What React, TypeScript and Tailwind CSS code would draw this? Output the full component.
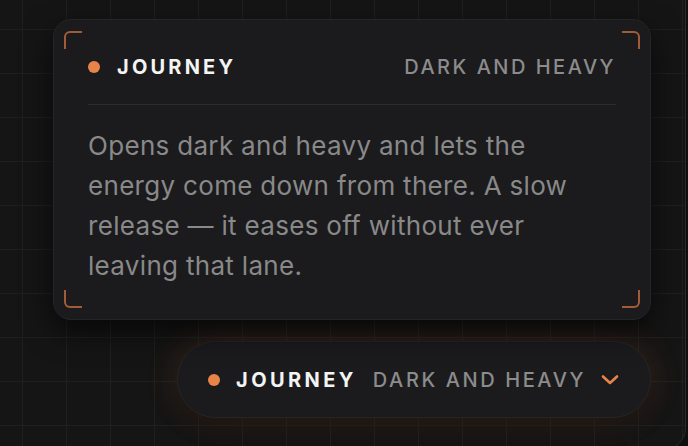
import React from "react";

function Bracket({ pos }: { pos: "tl" | "tr" | "bl" | "br" }) {
  const cls =
    pos === "tl"
      ? "top-[11px] left-[10px] border-t-2 border-l-2 rounded-tl-[6px]"
      : pos === "tr"
      ? "top-[11px] right-[10px] border-t-2 border-r-2 rounded-tr-[6px]"
      : pos === "bl"
      ? "bottom-[11px] left-[10px] border-b-2 border-l-2 rounded-bl-[6px]"
      : "bottom-[11px] right-[10px] border-b-2 border-r-2 rounded-br-[6px]";
  return <span className={`absolute w-[18px] h-[18px] border-[#c46c3c]/80 ${cls}`} />;
}

export default function App() {
  return (
    <div
      className="w-[688px] h-[446px] overflow-hidden bg-[#0f0f0f]"
      style={{ fontFamily: "Inter, 'Noto Sans', sans-serif" }}
    >
      <div className="-ml-[20px] -mt-[20px] w-[706px] h-[470px] rounded-[22px] border border-[#2a2a2a] bg-[#151515] bg-[linear-gradient(to_right,#1f1f1f_1px,transparent_1px),linear-gradient(to_bottom,#1f1f1f_1px,transparent_1px)] bg-[size:44px_44px] bg-[position:41px_4px] pt-[38px] pl-[72px]">
        <div className="w-[598px] flex flex-col items-end gap-[21px]">
          <div className="relative w-full rounded-[18px] border border-[#252527] bg-[#1b1b1d] shadow-[0_12px_30px_rgba(0,0,0,0.65)] px-[34px] pt-[33px] pb-[33px]">
            <Bracket pos="tl" />
            <Bracket pos="tr" />
            <Bracket pos="bl" />
            <Bracket pos="br" />
            <div className="flex items-center justify-between h-[28px]">
              <div className="flex items-center gap-[17px]">
                <span className="w-[12px] h-[12px] rounded-full bg-[#e8834a]" />
                <span className="text-[20px] font-bold tracking-[0.16em] text-[#f4f4f4] leading-[28px]">
                  JOURNEY
                </span>
              </div>
              <span className="text-[20px] font-medium tracking-[0.125em] text-[#8c8c8c] leading-[28px]">
                DARK AND HEAVY
              </span>
            </div>
            <div className="mt-[23px] h-px bg-[#2c2c2e]" />
            <p className="mt-[21px] text-[26px] tracking-[0.012em] leading-[40px] text-[#898989] pr-[30px]">
              Opens dark and heavy and lets the energy come down from there. A slow
              release — it eases off without ever leaving that lane.
            </p>
          </div>
          <div className="h-[77px] rounded-full border border-[#252527] bg-[#1b1b1d] shadow-[0_0_32px_rgba(232,131,74,0.2),0_8px_20px_rgba(0,0,0,0.45)] flex items-center pl-[30px] pr-[31px]">
            <span className="w-[12px] h-[12px] rounded-full bg-[#e8834a]" />
            <span className="ml-[16px] text-[20px] font-bold tracking-[0.17em] text-[#f4f4f4] leading-[28px]">
              JOURNEY
            </span>
            <span className="ml-[16px] text-[20px] font-medium tracking-[0.13em] text-[#8c8c8c] leading-[28px]">
              DARK AND HEAVY
            </span>
            <svg
              className="ml-[15px]"
              width="18"
              height="12"
              viewBox="0 0 18 12"
              fill="none"
            >
              <path
                d="M2 2.5 L9 9 L16 2.5"
                stroke="#e8834a"
                strokeWidth="2.6"
                strokeLinecap="round"
                strokeLinejoin="round"
              />
            </svg>
          </div>
        </div>
      </div>
    </div>
  );
}
